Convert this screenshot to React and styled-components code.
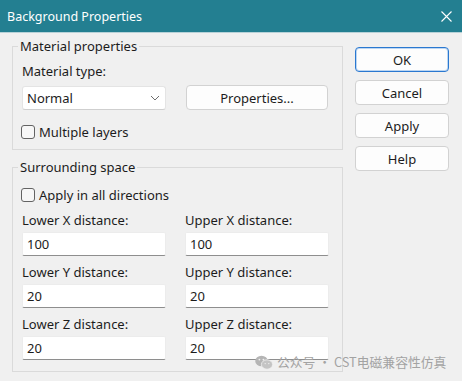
import React from 'react'
import styled, {createGlobalStyle} from 'styled-components'

const GlobalStyle = createGlobalStyle`
  html, body { margin:0; padding:0; background:#f0f0f0; }
  body {
    font-family: "Noto Sans", "Liberation Sans", sans-serif;
    font-size:13px;
    color:#1c1c1c;
  }
`

const Window = styled.div`
  width:462px;
  height:381px;
  display:flex;
  flex-direction:column;
  background:#f0f0f0;
  position:relative;
  overflow:hidden;
`

const TitleBar = styled.div`
  height:32px;
  flex:none;
  background:#237f91;
  border-bottom:1px solid #b8d2d8;
  display:flex;
  align-items:center;
  justify-content:space-between;
  padding:0 10px 0 7px;
  color:#fff;
  font-size:12.5px;
`

const Body = styled.div`
  display:flex;
  gap:12px;
  padding:5px 13px 0 12px;
`

const LeftCol = styled.div`
  width:331px;
  display:flex;
  flex-direction:column;
  gap:9px;
`

const Group = styled.fieldset`
  margin:0;
  min-width:0;
  padding:0 12px ${p => p.$pb}px 9px;
  border:1px solid #dadada;
`

const Legend = styled.legend`
  padding:0 2px;
  margin-left:-4px;
  line-height:16px;
`

const Label = styled.div`
  line-height:16px;
  margin-top:${p => p.$mt || 0}px;
  white-space:nowrap;
`

const Row = styled.div`
  display:grid;
  grid-template-columns:144px 144px;
  column-gap:19px;
  align-items:end;
  margin-top:${p => p.$mt || 0}px;
`

const Select = styled.div`
  height:24px;
  box-sizing:border-box;
  background:#fff;
  border:1px solid #e4e4e4;
  border-bottom-color:#cfcfcf;
  border-radius:3px;
  display:flex;
  align-items:center;
  justify-content:space-between;
  padding:0 5px 0 4px;
`

const Button = styled.div`
  height:25px;
  box-sizing:border-box;
  background:#fdfdfd;
  border:1px solid ${p => p.$primary ? '#2a78d0' : '#d2d2d2'};
  box-shadow:${p => p.$primary ? 'inset 0 0 0 1px #bcd6f2' : 'none'};
  border-radius:4px;
  display:flex;
  align-items:center;
  justify-content:center;
  ${p => p.$wide && 'width:142px; margin-left:1px;'}
`

const Check = styled.label`
  display:flex;
  align-items:center;
  gap:4px;
  height:16px;
  margin-left:-1px;
  margin-top:${p => p.$mt}px;
`

const Box = styled.span`
  width:14px;
  height:14px;
  box-sizing:border-box;
  border:1px solid #636363;
  border-radius:3px;
  background:#f7f7f7;
`

const Field = styled.div`
  display:flex;
  flex-direction:column;
  gap:4px;
`

const Input = styled.div`
  height:24px;
  box-sizing:border-box;
  background:#fff;
  border:1px solid #ececec;
  border-bottom:1px solid #8e8e8e;
  border-radius:2px;
  padding-left:4px;
  display:flex;
  align-items:center;
`

const DistGrid = styled.div`
  display:grid;
  grid-template-columns:144px 144px;
  column-gap:19px;
  row-gap:8px;
  margin-top:9px;
`

const Buttons = styled.div`
  width:94px;
  display:flex;
  flex-direction:column;
  gap:8px;
  padding-top:9px;
`

const Watermark = styled.div`
  position:absolute;
  left:255px;
  top:353px;
  display:flex;
  align-items:center;
  gap:4px;
  color:#a3a3a3;
  font-family:"Noto Sans CJK SC", "Noto Sans", sans-serif;
  font-size:12.8px;
  line-height:18px;
`

const Chevron = () => (
  <svg width="10" height="6" viewBox="0 0 10 6">
    <path d="M1 1l4 4 4-4" fill="none" stroke="#6d6d6d" strokeWidth="1" />
  </svg>
)

const Close = () => (
  <svg width="11" height="11" viewBox="0 0 11 11">
    <path d="M0.5 0.5l10 10M10.5 0.5l-10 10" stroke="#fff" strokeWidth="1.1" />
  </svg>
)

const WeChat = () => (
  <svg width="18" height="15" viewBox="0 0 18 15">
    <ellipse cx="6.5" cy="6" rx="6.3" ry="5.3" fill="#b5b5b5" />
    <ellipse cx="12" cy="9.5" rx="5.6" ry="4.7" fill="#c4c4c4" stroke="#f0f0f0" strokeWidth="0.8" />
    <circle cx="4.4" cy="4.6" r="0.9" fill="#f0f0f0" />
    <circle cx="8.4" cy="4.6" r="0.9" fill="#f0f0f0" />
    <circle cx="10.2" cy="8.6" r="0.7" fill="#f0f0f0" />
    <circle cx="13.8" cy="8.6" r="0.7" fill="#f0f0f0" />
  </svg>
)

const distances = [
  ['Lower X distance:', '100', 'Upper X distance:', '100'],
  ['Lower Y distance:', '20', 'Upper Y distance:', '20'],
  ['Lower Z distance:', '20', 'Upper Z distance:', '20'],
]

export default function App() {
  return (
    <Window>
      <GlobalStyle />
      <TitleBar>
        <span>Background Properties</span>
        <Close />
      </TitleBar>
      <Body>
        <LeftCol>
          <Group $pb={9}>
            <Legend>Material properties</Legend>
            <Label $mt={9}>Material type:</Label>
            <Row $mt={6}>
              <Select>
                <span>Normal</span>
                <Chevron />
              </Select>
              <Button $wide>Properties...</Button>
            </Row>
            <Check $mt={14}>
              <Box />
              Multiple layers
            </Check>
          </Group>
          <Group $pb={11}>
            <Legend>Surrounding space</Legend>
            <Check $mt={12}>
              <Box />
              Apply in all directions
            </Check>
            <DistGrid>
              {distances.map(d => (
                <React.Fragment key={d[0]}>
                  <Field>
                    <Label>{d[0]}</Label>
                    <Input>{d[1]}</Input>
                  </Field>
                  <Field>
                    <Label>{d[2]}</Label>
                    <Input>{d[3]}</Input>
                  </Field>
                </React.Fragment>
              ))}
            </DistGrid>
          </Group>
        </LeftCol>
        <Buttons>
          <Button $primary>OK</Button>
          <Button>Cancel</Button>
          <Button>Apply</Button>
          <Button>Help</Button>
        </Buttons>
      </Body>
      <Watermark>
        <WeChat />
        <span>公众号 · CST电磁兼容性仿真</span>
      </Watermark>
    </Window>
  )
}
